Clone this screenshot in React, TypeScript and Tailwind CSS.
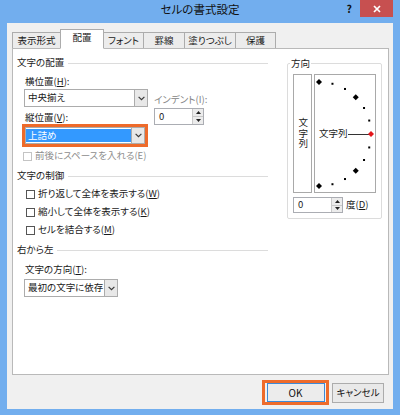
import React from 'react';

const FONT = "font-['Noto_Sans_CJK_JP','Noto_Sans',sans-serif] [font-feature-settings:'palt']";

const Chevron = () => (
    <svg width="7" height="5" viewBox="0 0 7 5">
        <path d="M0.6 0.8 L3.5 3.7 L6.4 0.8" fill="none" stroke="#3a3a3a" strokeWidth="1.2" />
    </svg>
);

const DropButton = () => (
    <div className="w-[13px] h-full border-l border-[#acacac] bg-[#e8e8e8] flex items-center justify-center">
        <Chevron />
    </div>
);

const Tri = ({ up }: { up?: boolean }) => (
    <svg width="5" height="3" viewBox="0 0 5 3">
        <path d={up ? 'M0 3 L2.5 0 L5 3 Z' : 'M0 0 L5 0 L2.5 3 Z'} fill="#222" />
    </svg>
);

const Spin = ({ className }: { className: string }) => (
    <div className={`flex border border-[#abadb3] bg-white ${className}`}>
        <div className="flex-1 pl-[4px] flex items-center text-[#1a1a1a]">0</div>
        <div className="w-[11px] flex flex-col border-l border-[#c9c9c9]">
            <div className="flex-1 bg-[#ececec] border-b border-[#c9c9c9] flex items-center justify-center"><Tri up /></div>
            <div className="flex-1 bg-[#ececec] flex items-center justify-center"><Tri /></div>
        </div>
    </div>
);

const U = ({ children }: { children: React.ReactNode }) => <span className="underline underline-offset-[1px]">{children}</span>;

const Header = ({ label }: { label: string }) => (
    <div className="h-[14px] flex items-center gap-[4px]">
        <span className="text-[#1a1a1a]">{label}</span>
        <div className="flex-1 h-px bg-[#dcdcdc]" />
    </div>
);

const Check = ({ children }: { children: React.ReactNode }) => (
    <div className="h-[18px] flex items-center gap-[3px] pl-[9px] text-[#1a1a1a]">
        <div className="w-[9px] h-[9px] border border-[#555] bg-white" />
        <span>{children}</span>
    </div>
);

const Dial = () => {
    const pts = [];
    for (let a = 90; a >= -90; a -= 15) {
        if (a === 0) continue;
        const r = (a * Math.PI) / 180;
        const x = 4 + 52 * Math.cos(r);
        const y = 59 - 52 * Math.sin(r);
        const big = a % 45 === 0;
        pts.push(
            big ? (
                <path key={a} d={`M${x - 3} ${y} L${x} ${y - 3} L${x + 3} ${y} L${x} ${y + 3} Z`} fill="#000" />
            ) : (
                <rect key={a} x={x - 1} y={y - 1} width="2" height="2" fill="#000" />
            )
        );
    }
    return (
        <svg className="absolute inset-0" width="60" height="117" viewBox="0 0 60 117">
            {pts}
            <line x1="33" y1="59.5" x2="54" y2="59.5" stroke="#333" strokeWidth="1" />
            <path d="M53 59 L56 56 L59 59 L56 62 Z" fill="#e3151a" />
        </svg>
    );
};

export default function App() {
    const tabs = [
        { label: '表示形式', w: 'w-[49px]' },
        { label: '配置', w: 'w-[44px]', active: true },
        { label: 'フォント', w: 'w-[41px]' },
        { label: '罫線', w: 'w-[42px]' },
        { label: '塗りつぶし', w: 'w-[52px]' },
        { label: '保護', w: 'w-[41px]' },
    ];

    return (
        <div className={`w-[400px] h-[415px] bg-[#72aeee] flex flex-col ${FONT} text-[9.5px] leading-none`}>
            {/* title bar */}
            <div className="h-[23px] grid grid-cols-[1fr_auto_1fr]">
                <div />
                <div className="pt-[4px] text-[11.5px] text-[#111]">セルの書式設定</div>
                <div className="flex justify-end items-start pr-[7px]">
                    <span className="mt-[4px] mr-[8px] text-[10.5px] font-bold text-[#111]">?</span>
                    <div className="w-[33px] h-[17px] bg-[#c75050] flex items-center justify-center">
                        <svg width="8" height="8" viewBox="0 0 8 8">
                            <path d="M1 1 L7 7 M7 1 L1 7" stroke="#fff" strokeWidth="1.7" />
                        </svg>
                    </div>
                </div>
            </div>

            {/* client */}
            <div className="ml-[7px] w-[386px] h-[386px] bg-[#f0f0f0] flex flex-col">
                <div className="mt-[6px] ml-[5px] h-[19px] flex items-end relative z-10">
                    {tabs.map((t, i) => (
                        <div
                            key={t.label}
                            className={`${t.w} ${i > 0 ? '-ml-px' : ''} border border-[#acacac] flex items-center justify-center text-[#1a1a1a] ${
                                t.active ? 'h-[20px] bg-white border-b-white -mb-px pb-[2px]' : 'h-[16px] bg-[#ececec] border-b-0'
                            }`}
                        >
                            {t.label}
                        </div>
                    ))}
                </div>

                {/* tab panel */}
                <div className="ml-[5px] w-[377px] h-[327px] bg-white border border-[#b9b9b9] flex pt-[7px] pl-[4px]">
                    {/* left column */}
                    <div className="w-[251px] flex flex-col">
                        <Header label="文字の配置" />
                        <div className="mt-[5px] flex">
                            <div className="w-[131px] flex flex-col">
                                <div className="h-[14px] pl-[8px] flex items-center text-[#1a1a1a]">
                                    横位置(<U>H</U>):
                                </div>
                                <div className="ml-[7px] w-[124px] h-[18px] border border-[#acacac] bg-white flex">
                                    <div className="flex-1 pl-[3px] flex items-center text-[#1a1a1a]">中央揃え</div>
                                    <DropButton />
                                </div>
                                <div className="mt-[4px] h-[13px] pl-[8px] flex items-center text-[#1a1a1a]">
                                    縦位置(<U>V</U>):
                                </div>
                                <div className="ml-[5px] w-[126px] h-[23px] border-[3px] border-[#ee6b2b] flex">
                                    <div className="flex-1 border border-[#acacac] bg-white flex">
                                        <div className="flex-1 my-[1px] bg-[#3399ff] pl-[2px] flex items-center text-white">上詰め</div>
                                        <DropButton />
                                    </div>
                                </div>
                                <div className="mt-[3px] h-[12px] flex items-center gap-[3px] pl-[6px] text-[#8d8d8d]">
                                    <div className="w-[9px] h-[9px] border border-[#c4c4c4] bg-white" />
                                    <span>前後にスペースを入れる(E)</span>
                                </div>
                            </div>
                            <div className="ml-[6px] flex flex-col">
                                <div className="mt-[18px] h-[14px] flex items-center text-[#838383]">インデント(I):</div>
                                <Spin className="mt-[1px] w-[50px] h-[17px]" />
                            </div>
                        </div>

                        <div className="mt-[7px]">
                            <Header label="文字の制御" />
                        </div>
                        <div className="mt-[2px] flex flex-col">
                            <Check>折り返して全体を表示する(<U>W</U>)</Check>
                            <Check>縮小して全体を表示する(<U>K</U>)</Check>
                            <Check>セルを結合する(<U>M</U>)</Check>
                        </div>

                        <div className="mt-[4px]">
                            <Header label="右から左" />
                        </div>
                        <div className="mt-[6px] h-[14px] pl-[8px] flex items-center text-[#1a1a1a]">
                            文字の方向(<U>T</U>):
                        </div>
                        <div className="mt-[2px] ml-[7px] w-[94px] h-[18px] border border-[#acacac] bg-white flex">
                            <div className="flex-1 pl-[3px] flex items-center text-[#1a1a1a]">最初の文字に依存</div>
                            <DropButton />
                        </div>
                    </div>

                    {/* orientation group */}
                    <fieldset className="ml-[19px] w-[95px] self-start border border-[#dcdcdc] rounded-[2px] px-[5px] pb-[5px]">
                        <legend className="ml-[-3px] px-[1px] h-[14px] leading-[14px] text-[#1a1a1a]">方向</legend>
                        <div className="mt-[4px] flex gap-[2px]">
                            <div className="w-[19px] h-[119px] border border-[#a9a9a9] bg-white flex items-center justify-center text-[#1a1a1a]">
                                <span className="[writing-mode:vertical-rl] tracking-[1px] leading-none">文字列</span>
                            </div>
                            <div className="w-[62px] h-[119px] border border-[#a9a9a9] bg-white relative flex items-center pl-[4px]">
                                <Dial />
                                <span className="relative text-[#1a1a1a] bg-white">文字列</span>
                            </div>
                        </div>
                        <div className="mt-[4px] flex items-center gap-[3px]">
                            <Spin className="w-[50px] h-[16px]" />
                            <span className="text-[#1a1a1a]">度(<U>D</U>)</span>
                        </div>
                    </fieldset>
                </div>

                {/* buttons */}
                <div className="mt-[5px] pr-[9px] flex justify-end items-center gap-[3px]">
                    <div className="w-[67px] h-[25px] border-[3px] border-[#ee6b2b] flex items-center justify-center">
                        <div className="w-[58px] h-[19px] border border-[#3c8ad8] bg-[#ececec] flex items-center justify-center text-[10px] text-[#111]">
                            OK
                        </div>
                    </div>
                    <div className="w-[52px] h-[20px] border border-[#acacac] bg-[#e9e9e9] flex items-center justify-center text-[#111]">
                        キャンセル
                    </div>
                </div>
            </div>
        </div>
    );
}
